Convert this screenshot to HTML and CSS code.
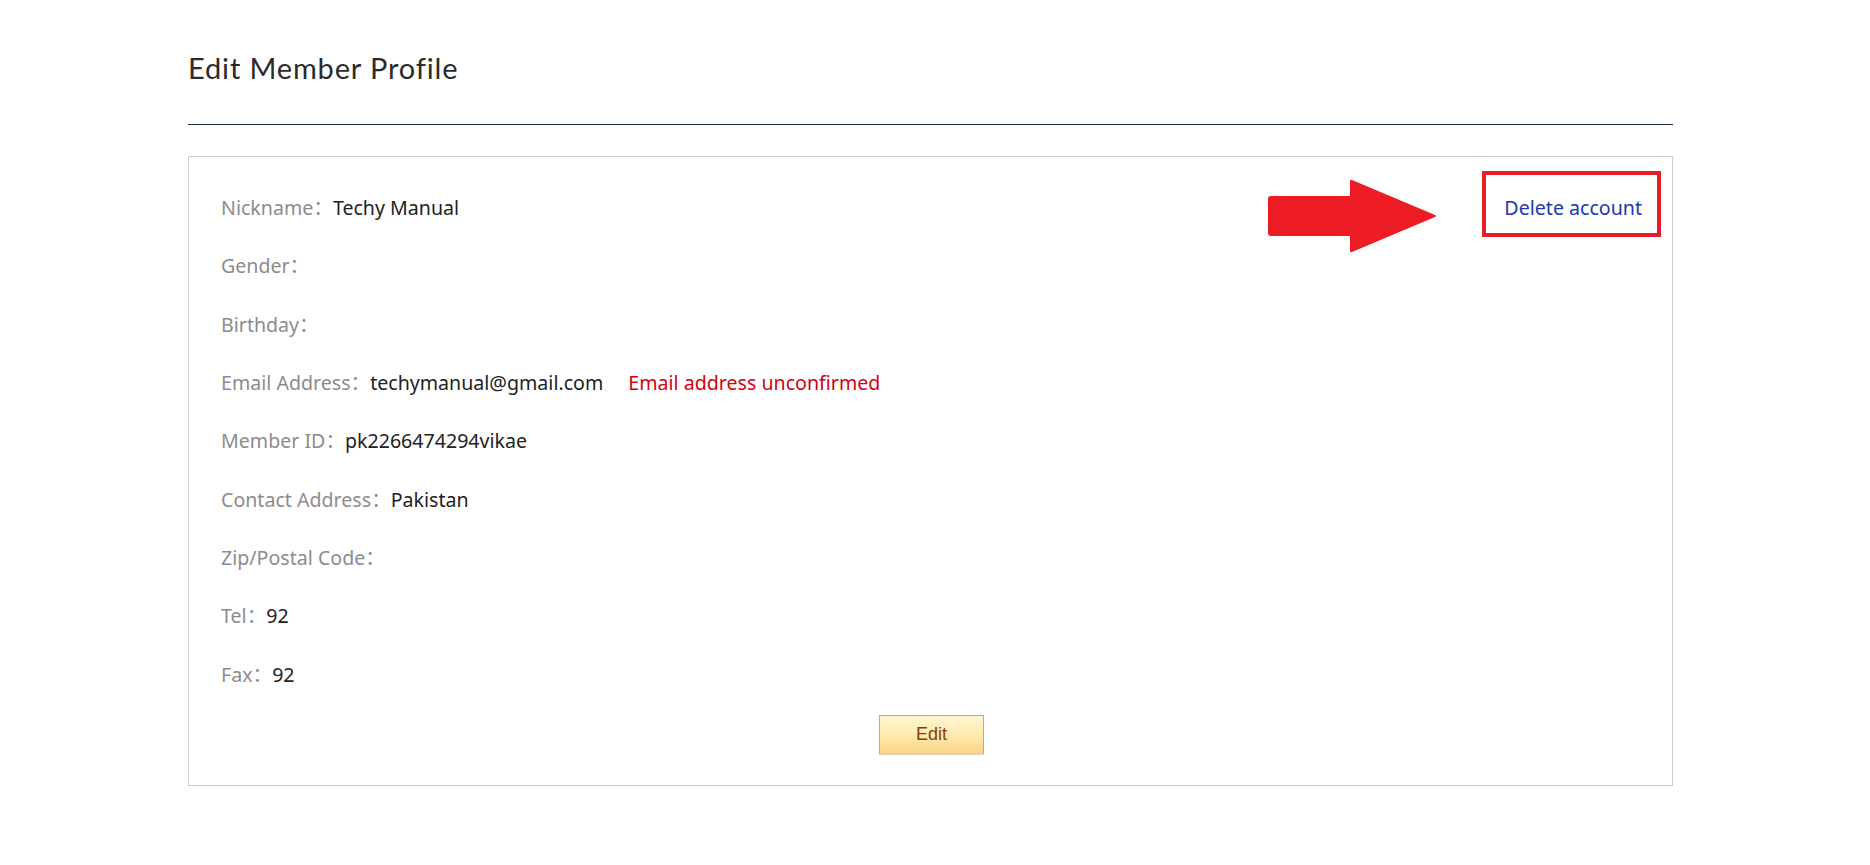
FILE: index.html
```html
<!DOCTYPE html>
<html lang="en">
<head>
<meta charset="utf-8">
<title>Edit Member Profile</title>
<link rel="stylesheet" href="styles.css">
</head>
<body>
<div class="page">
  <div class="page-head">
    <h1 class="page-title">Edit Member Profile</h1>
  </div>
  <div class="card">
    <div class="row row-first">
      <div><span class="label">Nickname：</span><span class="value">Techy Manual</span></div>
      <a class="delete-link" href="#">Delete account</a>
    </div>
    <div class="row"><span class="label">Gender：</span></div>
    <div class="row"><span class="label">Birthday：</span></div>
    <div class="row"><span class="label">Email Address：</span><span class="value">techymanual@gmail.com</span><span class="warn">Email address unconfirmed</span></div>
    <div class="row"><span class="label">Member ID：</span><span class="value">pk2266474294vikae</span></div>
    <div class="row"><span class="label">Contact Address：</span><span class="value">Pakistan</span></div>
    <div class="row"><span class="label">Zip/Postal Code：</span></div>
    <div class="row"><span class="label">Tel：</span><span class="value">92</span></div>
    <div class="row"><span class="label">Fax：</span><span class="value">92</span></div>
    <div class="actions">
      <button class="edit-btn" type="button">Edit</button>
    </div>

    <svg class="arrow" width="170" height="75" viewBox="0 0 170 75" aria-hidden="true">
      <path d="M3 17 H82 V2 Q82 0 84 1 L167 36 Q169 37 167 38 L84 73 Q82 74 82 72 V57 H3 Q0 57 0 54 V20 Q0 17 3 17 Z" fill="#ed1c24"/>
    </svg>
    <div class="highlight"></div>
  </div>
</div>
</body>
</html>
```

FILE: styles.css
```css
html, body {
  margin: 0;
  padding: 0;
  background: #ffffff;
}

.page {
  width: 1485px;
  margin-left: 188px;
  padding-top: 50px;
}

.page-head {
  border-bottom: 1px solid #1a2f48;
  padding-bottom: 38px;
}

.page-title {
  margin: 0;
  font-family: "Lato", "Open Sans", sans-serif;
  font-weight: 400;
  font-size: 29px;
  line-height: 36px;
  color: #2b2b2b;
  letter-spacing: 0.85px;
}

.card {
  position: relative;
  margin-top: 31px;
  border: 1px solid #cccccc;
  padding: 22px 30px 30px 32px;
  height: 630px;
  box-sizing: border-box;
}

.row {
  display: flex;
  align-items: center;
  height: 58.3px;
  font-family: "Noto Sans", "Noto Sans CJK SC", sans-serif;
  font-size: 19.6px;
  line-height: 28px;
  white-space: nowrap;
}

.row-first {
  justify-content: space-between;
}

.label {
  color: #8c8c8c;
}

.value {
  color: #222222;
}

.warn {
  color: #d7000f;
  margin-left: 25px;
}

.delete-link {
  color: #1839b5;
  text-decoration: none;
}

.actions {
  display: flex;
  justify-content: center;
  margin-top: 11px;
}

.edit-btn {
  width: 105px;
  height: 40px;
  box-sizing: border-box;
  border: 1px solid #e2a34a;
  border-bottom: 2px solid #d9d2c6;
  background: linear-gradient(to bottom, #fff6d2 0%, #ffedb3 45%, #fcd486 100%);
  color: #8a3c08;
  font-family: "Liberation Sans", Arial, sans-serif;
  font-size: 18px;
  padding: 0;
  cursor: pointer;
}

.arrow {
  position: absolute;
  left: 1079px;
  top: 22px;
}

.highlight {
  position: absolute;
  right: 11px;
  top: 14px;
  width: 179px;
  height: 66px;
  box-sizing: border-box;
  border: 4px solid #e51f2a;
}
```
